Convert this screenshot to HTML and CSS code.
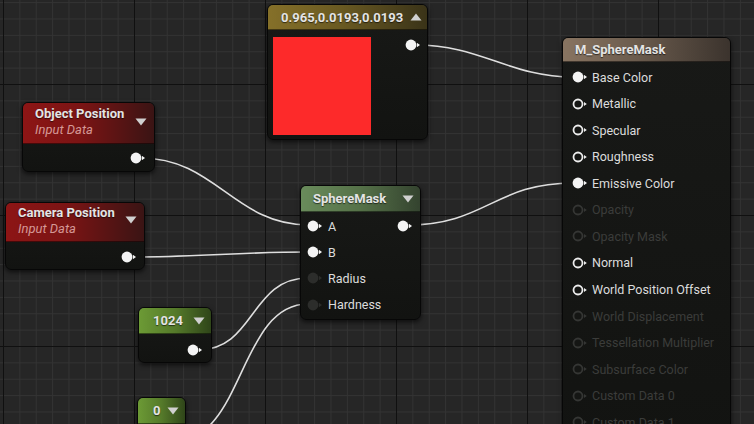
FILE: index.html
```html
<!DOCTYPE html>
<html>
<head>
<meta charset="utf-8">
<link rel="stylesheet" href="styles.css">
</head>
<body>
<svg class="defs" width="0" height="0" aria-hidden="true">
  <symbol id="pin-full" viewBox="0 0 16 12">
    <circle cx="6" cy="6" r="5.4" fill="currentColor"/>
    <polygon points="11.9,3.8 15,6 11.9,8.2" fill="currentColor"/>
  </symbol>
  <symbol id="pin-ring" viewBox="0 0 16 12">
    <circle cx="6" cy="6" r="4.5" fill="#151614" stroke="currentColor" stroke-width="1.8"/>
    <polygon points="12,3.9 14.8,6 12,8.1" fill="currentColor"/>
  </symbol>
  <symbol id="tri-down" viewBox="0 0 12 8">
    <polygon points="0.5,0.5 11.5,0.5 6,7.5" fill="currentColor"/>
  </symbol>
  <symbol id="tri-up" viewBox="0 0 12 8">
    <polygon points="0.5,7.5 11.5,7.5 6,0.5" fill="currentColor"/>
  </symbol>
</svg>

<div class="canvas">
  <svg class="wires" width="754" height="424" viewBox="0 0 754 424">
    <path d="M416,45 C480,45 510,77 573,77"/>
    <path d="M141,158 C215,158 235,225 308,225"/>
    <path d="M132,257 C200,257 240,252 308,252"/>
    <path d="M198,350 C255,350 250,278 308,278"/>
    <path d="M172,442 C245,442 238,304 308,304"/>
    <path d="M408,225 C485,225 495,183 573,183"/>
  </svg>

  <!-- Constant3Vector -->
  <div class="node n-color">
    <div class="head head-gold">
      <span class="title">0.965,0.0193,0.0193</span>
      <svg class="tri"><use href="#tri-up"/></svg>
    </div>
    <div class="body body-color">
      <div class="swatch"></div>
      <svg class="pin full"><use href="#pin-full"/></svg>
    </div>
  </div>

  <!-- Object Position -->
  <div class="node n-obj">
    <div class="head head-red">
      <div class="titles">
        <span class="title">Object Position</span>
        <span class="sub">Input Data</span>
      </div>
      <svg class="tri"><use href="#tri-down"/></svg>
    </div>
    <div class="body body-out">
      <svg class="pin full"><use href="#pin-full"/></svg>
    </div>
  </div>

  <!-- Camera Position -->
  <div class="node n-cam">
    <div class="head head-red">
      <div class="titles">
        <span class="title">Camera Position</span>
        <span class="sub">Input Data</span>
      </div>
      <svg class="tri"><use href="#tri-down"/></svg>
    </div>
    <div class="body body-out">
      <svg class="pin full"><use href="#pin-full"/></svg>
    </div>
  </div>

  <!-- SphereMask -->
  <div class="node n-sphere">
    <div class="head head-sage">
      <span class="title">SphereMask</span>
      <svg class="tri"><use href="#tri-down"/></svg>
    </div>
    <div class="body body-list sm-list">
      <div class="row">
        <div class="in"><svg class="pin full"><use href="#pin-full"/></svg><span class="lbl">A</span></div>
        <svg class="pin full"><use href="#pin-full"/></svg>
      </div>
      <div class="row">
        <div class="in"><svg class="pin full"><use href="#pin-full"/></svg><span class="lbl">B</span></div>
      </div>
      <div class="row">
        <div class="in"><svg class="pin dim"><use href="#pin-full"/></svg><span class="lbl">Radius</span></div>
      </div>
      <div class="row">
        <div class="in"><svg class="pin dim"><use href="#pin-full"/></svg><span class="lbl">Hardness</span></div>
      </div>
    </div>
  </div>

  <!-- 1024 -->
  <div class="node n-1024">
    <div class="head head-green">
      <span class="title">1024</span>
      <svg class="tri"><use href="#tri-down"/></svg>
    </div>
    <div class="body body-out">
      <svg class="pin full"><use href="#pin-full"/></svg>
    </div>
  </div>

  <!-- 0 -->
  <div class="node n-zero">
    <div class="head head-green">
      <span class="title">0</span>
      <svg class="tri"><use href="#tri-down"/></svg>
    </div>
    <div class="body body-out"></div>
  </div>

  <!-- Material result -->
  <div class="node n-mat">
    <div class="head head-brown">
      <span class="title">M_SphereMask</span>
    </div>
    <div class="body body-list mat-list">
      <div class="row"><div class="in"><svg class="pin full"><use href="#pin-full"/></svg><span class="lbl">Base Color</span></div></div>
      <div class="row"><div class="in"><svg class="pin ring"><use href="#pin-ring"/></svg><span class="lbl">Metallic</span></div></div>
      <div class="row"><div class="in"><svg class="pin ring"><use href="#pin-ring"/></svg><span class="lbl">Specular</span></div></div>
      <div class="row"><div class="in"><svg class="pin ring"><use href="#pin-ring"/></svg><span class="lbl">Roughness</span></div></div>
      <div class="row"><div class="in"><svg class="pin full"><use href="#pin-full"/></svg><span class="lbl">Emissive Color</span></div></div>
      <div class="row off"><div class="in"><svg class="pin ring"><use href="#pin-ring"/></svg><span class="lbl">Opacity</span></div></div>
      <div class="row off"><div class="in"><svg class="pin ring"><use href="#pin-ring"/></svg><span class="lbl">Opacity Mask</span></div></div>
      <div class="row"><div class="in"><svg class="pin ring"><use href="#pin-ring"/></svg><span class="lbl">Normal</span></div></div>
      <div class="row"><div class="in"><svg class="pin ring"><use href="#pin-ring"/></svg><span class="lbl">World Position Offset</span></div></div>
      <div class="row off"><div class="in"><svg class="pin ring"><use href="#pin-ring"/></svg><span class="lbl">World Displacement</span></div></div>
      <div class="row off"><div class="in"><svg class="pin ring"><use href="#pin-ring"/></svg><span class="lbl">Tessellation Multiplier</span></div></div>
      <div class="row off"><div class="in"><svg class="pin ring"><use href="#pin-ring"/></svg><span class="lbl">Subsurface Color</span></div></div>
      <div class="row off"><div class="in"><svg class="pin ring"><use href="#pin-ring"/></svg><span class="lbl">Custom Data 0</span></div></div>
      <div class="row off"><div class="in"><svg class="pin ring"><use href="#pin-ring"/></svg><span class="lbl">Custom Data 1</span></div></div>
    </div>
  </div>
</div>
</body>
</html>
```

FILE: styles.css
```css
html, body {
  margin: 0;
  padding: 0;
  background: #262626;
}

.defs {
  position: absolute;
  width: 0;
  height: 0;
  overflow: hidden;
}

.canvas {
  position: relative;
  width: 754px;
  height: 424px;
  overflow: hidden;
  font-family: Roboto, "Noto Sans", sans-serif;
  background-color: #262626;
  background-image:
    linear-gradient(to right, #101010 1px, transparent 1px),
    linear-gradient(to bottom, #101010 1px, transparent 1px),
    linear-gradient(to right, #333333 1px, transparent 1px),
    linear-gradient(to bottom, #333333 1px, transparent 1px);
  background-size: 131px 131px, 131px 131px, 16.375px 16.375px, 16.375px 16.375px;
  background-position: 3px 84px, 3px 84px, 3px 84px, 3px 84px;
}

.wires {
  position: absolute;
  left: 0;
  top: 0;
}

.wires path {
  fill: none;
  stroke: #dedede;
  stroke-width: 1.6;
}

/* ---------- nodes ---------- */
.node {
  position: absolute;
  display: flex;
  flex-direction: column;
  box-sizing: border-box;
  border: 1px solid #070707;
  border-radius: 6px;
  background: linear-gradient(to bottom, #181917, #121311);
  box-shadow: 0 2px 5px rgba(0, 0, 0, 0.65), inset 0 1px 0 rgba(255, 255, 255, 0.06);
  overflow: hidden;
}

.head {
  display: flex;
  align-items: center;
  justify-content: space-between;
  box-sizing: border-box;
  padding: 0 7px 0 12px;
  flex: none;
  border-bottom: 1px solid rgba(0, 0, 0, 0.5);
}

.title {
  font-size: 13px;
  font-weight: 700;
  color: #e4e4e4;
  white-space: nowrap;
  text-shadow: 0 1px 1px rgba(0, 0, 0, 0.6);
}

.titles {
  display: flex;
  flex-direction: column;
  gap: 1px;
}

.sub {
  font-size: 13px;
  font-style: italic;
  color: #d59896;
  white-space: nowrap;
}

.tri {
  width: 12px;
  height: 8px;
  color: #d0d0d0;
  flex: none;
}

.head-gold {
  height: 25px;
  background: linear-gradient(to right, #857029 0%, #6a5a22 45%, #3a3318 100%);
}

.head-red {
  align-items: flex-start;
  background: linear-gradient(to right, #8d1515 0%, #7a1414 45%, #3a1414 100%);
}

.head-sage {
  height: 26px;
  background: linear-gradient(to right, #698b5b 0%, #557148 50%, #34432f 100%);
}

.head-green {
  height: 26px;
  background: linear-gradient(to right, #6c9a35 0%, #557a2a 50%, #2f4519 100%);
}

.head-brown {
  height: 24px;
  background: linear-gradient(to right, #887461 0%, #6a5b4d 45%, #3b332d 100%);
}

.body {
  flex: 1;
  display: flex;
}

/* pins */
.pin {
  width: 16px;
  height: 12px;
  flex: none;
}

.pin.full { color: #f4f4f4; }
.pin.ring { color: #ececec; }
.pin.dim { color: #2c2d2b; }
.row.off .pin.ring { color: #353634; }

.lbl {
  font-size: 12.5px;
  color: #dcdcdc;
  white-space: nowrap;
}

.row.off .lbl { color: #3b3c3a; }

.body-out {
  justify-content: flex-end;
  align-items: center;
  padding-right: 8px;
}

.body-list {
  flex-direction: column;
}

.row {
  display: flex;
  align-items: center;
  justify-content: space-between;
  flex: none;
}

.in {
  display: flex;
  align-items: center;
  gap: 5px;
}

/* ---------- node placement on the graph canvas ---------- */
.n-color {
  left: 267px;
  top: 4px;
  width: 161px;
  height: 136px;
}

.n-color .head { padding-left: 13px; padding-right: 5px; }

.body-color {
  justify-content: space-between;
  align-items: flex-start;
  padding: 7px 6px 0 5px;
}

.swatch {
  width: 98px;
  height: 98px;
  background: #fd2a2a;
}

.body-color .pin { margin-top: 2px; }

.n-obj {
  left: 22px;
  top: 102px;
  width: 133px;
  height: 70px;
}

.n-obj .head { height: 41px; padding: 3px 7px 0 12px; }
.n-obj .tri { margin-top: 12px; }
.n-obj .body-out { padding-right: 8px; padding-top: 1px; }

.n-cam {
  left: 5px;
  top: 202px;
  width: 140px;
  height: 68px;
}

.n-cam .head { height: 39px; padding: 2px 7px 0 12px; }
.n-cam .tri { margin-top: 11px; }
.n-cam .body-out { padding-right: 7px; padding-top: 2px; }

.n-sphere {
  left: 300px;
  top: 185px;
  width: 121px;
  height: 135px;
}

.n-sphere .head { padding-right: 6px; }

.sm-list {
  padding: 1px 7px 0 6px;
}

.sm-list .row { height: 26.2px; }

.n-1024 {
  left: 138px;
  top: 307px;
  width: 74px;
  height: 56px;
}

.n-1024 .head { padding-left: 14px; padding-right: 6px; }
.n-1024 .body-out { padding-right: 8px; padding-top: 3px; }

.n-zero {
  left: 137px;
  top: 397px;
  width: 49px;
  height: 60px;
}

.n-zero .head { padding-left: 15px; padding-right: 6px; }

.n-mat {
  left: 562px;
  top: 37px;
  width: 169px;
  height: 420px;
}

.n-mat .head { padding-left: 12px; }

.mat-list {
  padding: 2px 0 0 9px;
}

.mat-list .row { height: 26.54px; }
.mat-list .in { gap: 4px; }
```
